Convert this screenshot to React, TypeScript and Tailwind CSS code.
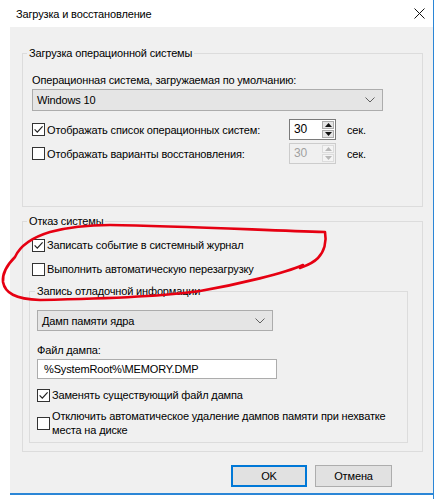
import React from 'react'

function Checkbox({ checked }: { checked?: boolean }) {
	return (
		<span className="flex h-[13px] w-[13px] shrink-0 items-center justify-center border border-[#333] bg-white">
			{checked && (
				<svg width="11" height="11" viewBox="0 0 11 11">
					<path d="M1.6 5.4 L4.3 8.2 L9.6 2.4" stroke="#222" strokeWidth="1.2" fill="none" />
				</svg>
			)}
		</span>
	)
}

function Chevron() {
	return (
		<svg width="10" height="6" viewBox="0 0 10 6">
			<path d="M0.5 0.5 L5 5 L9.5 0.5" stroke="#606060" strokeWidth="1" fill="none" />
		</svg>
	)
}

function Select({ value, className }: { value: string; className: string }) {
	return (
		<div
			className={`flex items-center justify-between border border-[#acacac] bg-[#e5e5e5] pr-[7px] pl-[4px] ${className}`}
		>
			<span>{value}</span>
			<Chevron />
		</div>
	)
}

function Arrow({ up, color }: { up?: boolean; color: string }) {
	return (
		<svg width="7" height="4" viewBox="0 0 7 4">
			<path d={up ? 'M0 4 L3.5 0 L7 4 Z' : 'M0 0 L3.5 4 L7 0 Z'} fill={color} />
		</svg>
	)
}

function SpinBox({ disabled }: { disabled?: boolean }) {
	return (
		<div
			className={`flex h-[21px] w-[47px] border ${
				disabled ? 'border-[#cccccc] bg-[#f0f0f0] text-[#a0a0a0]' : 'border-[#7a7a7a] bg-white'
			}`}
		>
			<span className="flex-1 pl-[4px] text-[12px] leading-[19px]">30</span>
			<div className="flex w-[14px] flex-col gap-[1px] p-[1px]">
				<span
					className={`flex flex-1 items-center justify-center border ${
						disabled ? 'border-[#dcdcdc] bg-[#f4f4f4]' : 'border-[#acacac] bg-[#e5e5e5]'
					}`}
				>
					<Arrow up color={disabled ? '#b8b8b8' : '#111'} />
				</span>
				<span
					className={`flex flex-1 items-center justify-center border ${
						disabled ? 'border-[#dcdcdc] bg-[#f4f4f4]' : 'border-[#acacac] bg-[#e5e5e5]'
					}`}
				>
					<Arrow color={disabled ? '#b8b8b8' : '#111'} />
				</span>
			</div>
		</div>
	)
}

function CheckRow({ checked, children }: { checked?: boolean; children: React.ReactNode }) {
	return (
		<div className="flex h-[16px] items-center gap-[2px] whitespace-nowrap">
			<Checkbox checked={checked} />
			<span>{children}</span>
		</div>
	)
}

export default function App() {
	return (
		<div className="relative h-[499px] w-[434px] overflow-hidden bg-white font-['Liberation_Sans',sans-serif] text-[11px] leading-[16px] tracking-[-0.15px] whitespace-nowrap text-black">
			<div className="h-[499px] border-r border-[#2b86d6]">
				{/* title bar */}
				<div className="flex h-[27px] items-center justify-between pr-[8px] pl-[16px]">
					<span>Загрузка и восстановление</span>
					<svg width="11" height="11" viewBox="0 0 11 11">
						<path d="M0.5 0.5 L10.5 10.5 M10.5 0.5 L0.5 10.5" stroke="#111" strokeWidth="1" />
					</svg>
				</div>

				<div className="ml-[10px] h-[468px] border-b-2 border-[#2b86d6] bg-[#f0f0f0] pt-[18px] pb-[10px]">
					<fieldset className="ml-[12px] w-[401px] border border-[#dcdcdc] pr-[9px] pb-[42px] pl-[9px]">
						<legend className="ml-[-5px] px-[2px]">Загрузка операционной системы</legend>
						<div className="pt-[11px]">Операционная система, загружаемая по умолчанию:</div>
						<Select value="Windows 10" className="mt-[1px] h-[22px] w-[351px]" />
						<div className="mt-[8px] flex items-center">
							<div className="w-[257px]">
								<CheckRow checked>Отображать список операционных систем:</CheckRow>
							</div>
							<SpinBox />
							<span className="ml-[11px]">сек.</span>
						</div>
						<div className="mt-[3px] flex items-center">
							<div className="w-[257px]">
								<CheckRow>Отображать варианты восстановления:</CheckRow>
							</div>
							<SpinBox disabled />
							<span className="ml-[11px]">сек.</span>
						</div>
					</fieldset>

					<fieldset className="mt-[6px] ml-[12px] w-[401px] border border-[#dcdcdc] pr-[9px] pb-[8px] pl-[6px]">
						<legend className="ml-[-2px] px-[2px]">Отказ системы</legend>
						<div className="ml-[3px] pt-[8px]">
							<CheckRow checked>Записать событие в системный журнал</CheckRow>
						</div>
						<div className="mt-[8px] ml-[3px]">
							<CheckRow>Выполнить автоматическую перезагрузку</CheckRow>
						</div>

						<fieldset className="mt-[6px] w-[379px] border border-[#dcdcdc] pr-[7px] pb-[5px] pl-[7px]">
							<legend className="ml-[-2px] px-[2px]">Запись отладочной информации</legend>
							<Select value="Дамп памяти ядра" className="mt-[11px] h-[21px] w-[236px]" />
							<div className="mt-[11px]">Файл дампа:</div>
							<div className="mt-[1px] h-[20px] w-[240px] border border-[#acacac] bg-white pl-[6px] leading-[18px]">
								%SystemRoot%\MEMORY.DMP
							</div>
							<div className="mt-[8px]">
								<CheckRow checked>Заменять существующий файл дампа</CheckRow>
							</div>
							<div className="mt-[6px] flex items-center gap-[2px]">
								<Checkbox />
								<span className="leading-[14px]">
									Отключить автоматическое удаление дампов памяти при нехватке
									<br />
									места на диске
								</span>
							</div>
						</fieldset>
					</fieldset>

					<div className="mt-[13px] flex justify-end gap-[8px] pr-[41px]">
						<button className="h-[22px] w-[76px] border border-[#0078d7] bg-[#e1e1e1] shadow-[inset_0_0_0_1px_#0078d7]">
							OK
						</button>
						<button className="h-[22px] w-[77px] border border-[#adadad] bg-[#e1e1e1]">Отмена</button>
					</div>
				</div>
			</div>

			{/* hand drawn annotation */}
			<svg className="pointer-events-none absolute inset-0" width="434" height="499" viewBox="0 0 434 499">
				<path
					d="M15 257 C20 246 30 238 50 232 C65 228 85 225 110 225 C180 226 260 230 325 232 C327 242 324 252 318 258 C312 264 305 266 300 268 L303 265 C285 273 240 284 200 291 C160 297 90 299 40 300 C15 299 5 293 3 282 C2 273 8 264 15 257"
					stroke="#e60012"
					strokeWidth="2.6"
					fill="none"
					strokeLinecap="round"
					strokeLinejoin="round"
				/>
			</svg>
		</div>
	)
}
